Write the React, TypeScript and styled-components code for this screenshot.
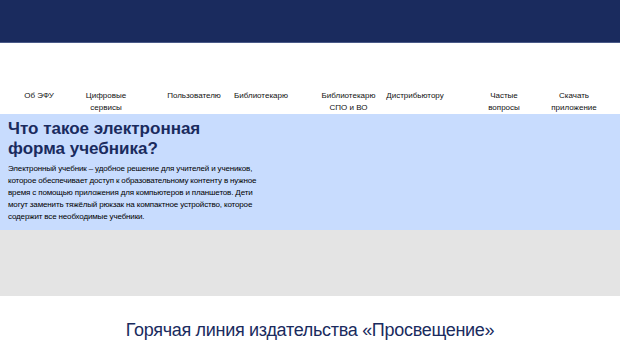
import styled, { createGlobalStyle } from "styled-components";

const GlobalStyle = createGlobalStyle`
  html, body {
    margin: 0;
    padding: 0;
    background: #ffffff;
    font-family: "Liberation Sans", Arial, sans-serif;
  }
`;

const Page = styled.div`
  width: 620px;
  display: flex;
  flex-direction: column;
`;

const Header = styled.header`
  height: 42px;
  background: #1a2b5e;
  border-bottom: 1px solid #4a5a88;
`;

const Nav = styled.nav`
  display: flex;
  align-items: flex-start;
  padding: 47px 0 0 0;
  height: 24px;
`;

const NavItem = styled.a<{ w: number; ml: number }>`
  width: ${(p) => p.w}px;
  margin-left: ${(p) => p.ml}px;
  flex-shrink: 0;
  text-align: center;
  font-size: 8px;
  line-height: 12px;
  color: #111;
  text-decoration: none;
`;

const Intro = styled.section`
  background: #c8dcfe;
  height: 116px;
  padding: 5px 8px 0 8px;
  box-sizing: border-box;
`;

const Content = styled.div`
  width: 255px;
`;

const Title = styled.h1`
  max-width: 230px;
  margin: 0 0 4px 0;
  font-size: 17px;
  line-height: 20px;
  font-weight: 700;
  color: #1a2b5e;
`;

const Text = styled.p`
  margin: 0;
  font-size: 8px;
  letter-spacing: -0.15px;
  line-height: 12px;
  color: #000;
`;

const Gray = styled.div`
  height: 66px;
  background: #e4e4e4;
`;

const Hotline = styled.h2`
  margin: 22px 0 0 0;
  text-align: center;
  font-size: 18px;
  letter-spacing: -0.3px;
  line-height: 24px;
  font-weight: 400;
  color: #1a2b5e;
`;

const navItems = [
  { label: "Об ЭФУ", w: 46, ml: 16 },
  { label: "Цифровые сервисы", w: 48, ml: 20 },
  { label: "Пользователю", w: 56, ml: 36 },
  { label: "Библиотекарю", w: 58, ml: 10 },
  { label: "Библиотекарю СПО и ВО", w: 57, ml: 30 },
  { label: "Дистрибьютору", w: 60, ml: 8 },
  { label: "Частые вопросы", w: 48, ml: 35 },
  { label: "Скачать приложение", w: 52, ml: 20 },
];

function App() {
  return (
    <Page>
      <GlobalStyle />
      <Header />
      <Nav>
        {navItems.map((item) => (
          <NavItem key={item.label} w={item.w} ml={item.ml} href="#">
            {item.label}
          </NavItem>
        ))}
      </Nav>
      <Intro>
        <Content>
          <Title>Что такое электронная форма учебника?</Title>
          <Text>
            Электронный учебник – удобное решение для учителей и учеников,
            которое обеспечивает доступ к образовательному контенту в нужное
            время с помощью приложения для компьютеров и планшетов. Дети могут
            заменить тяжёлый рюкзак на компактное устройство, которое содержит
            все необходимые учебники.
          </Text>
        </Content>
      </Intro>
      <Gray />
      <Hotline>Горячая линия издательства «Просвещение»</Hotline>
    </Page>
  );
}

export default App;
